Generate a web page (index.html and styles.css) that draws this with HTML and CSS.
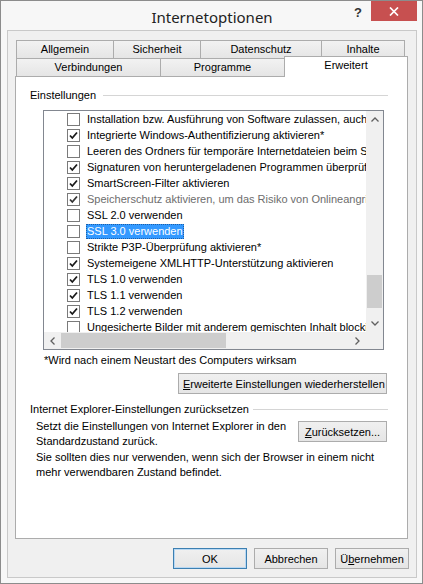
FILE: index.html
```html
<!DOCTYPE html>
<html lang="de">
<head>
    <meta charset="UTF-8">
    <meta name="viewport" content="width=device-width, initial-scale=1.0">
    <title>Internetoptionen</title>
    <link rel="stylesheet" href="styles.css">
</head>
<body>
    <div class="window">
        <div class="titlebar">
            <div></div>
            <div class="title">Internetoptionen</div>
            <div class="controls">
                <span class="help">?</span>
                <span class="close">
                    <svg width="10" height="9" viewBox="0 0 10 9"><path d="M1 0.5L9 8.5M9 0.5L1 8.5" stroke="#fff" stroke-width="1.7"/></svg>
                </span>
            </div>
        </div>

        <div class="client">
            <!-- tab headers, two rows -->
            <div class="tabs">
                <div class="tab-row">
                    <div class="tab tab-allgemein">Allgemein</div>
                    <div class="tab tab-sicherheit">Sicherheit</div>
                    <div class="tab tab-datenschutz">Datenschutz</div>
                    <div class="tab tab-inhalte">Inhalte</div>
                </div>
                <div class="tab-row">
                    <div class="tab tab-verbindungen">Verbindungen</div>
                    <div class="tab tab-programme">Programme</div>
                    <div class="tab tab-erweitert active">Erweitert</div>
                </div>
            </div>

            <div class="panel">
                <div class="group-head">
                    <span>Einstellungen</span>
                    <span class="rule"></span>
                </div>

                <div class="listbox">
                    <div class="list-items">
                        <div class="item"><span class="cb"></span><span class="text">Installation bzw. Ausführung von Software zulassen, auch wenn die Signatur ungültig ist</span></div>
                        <div class="item"><span class="cb on"><svg width="11" height="11" viewBox="0 0 11 11"><path d="M2 5.5L4.3 8L9 2.5" fill="none" stroke="#1a1a1a" stroke-width="1.8"/></svg></span><span class="text">Integrierte Windows-Authentifizierung aktivieren*</span></div>
                        <div class="item"><span class="cb"></span><span class="text">Leeren des Ordners für temporäre Internetdateien beim Schließen des Browsers</span></div>
                        <div class="item"><span class="cb on"><svg width="11" height="11" viewBox="0 0 11 11"><path d="M2 5.5L4.3 8L9 2.5" fill="none" stroke="#1a1a1a" stroke-width="1.8"/></svg></span><span class="text">Signaturen von heruntergeladenen Programmen überprüfen</span></div>
                        <div class="item"><span class="cb on"><svg width="11" height="11" viewBox="0 0 11 11"><path d="M2 5.5L4.3 8L9 2.5" fill="none" stroke="#1a1a1a" stroke-width="1.8"/></svg></span><span class="text">SmartScreen-Filter aktivieren</span></div>
                        <div class="item disabled"><span class="cb on"><svg width="11" height="11" viewBox="0 0 11 11"><path d="M2 5.5L4.3 8L9 2.5" fill="none" stroke="#1a1a1a" stroke-width="1.8"/></svg></span><span class="text">Speicherschutz aktivieren, um das Risiko von Onlineangriffen zu verringern*</span></div>
                        <div class="item"><span class="cb"></span><span class="text">SSL 2.0 verwenden</span></div>
                        <div class="item"><span class="cb"></span><span class="text selected">SSL 3.0 verwenden</span></div>
                        <div class="item"><span class="cb"></span><span class="text">Strikte P3P-Überprüfung aktivieren*</span></div>
                        <div class="item"><span class="cb on"><svg width="11" height="11" viewBox="0 0 11 11"><path d="M2 5.5L4.3 8L9 2.5" fill="none" stroke="#1a1a1a" stroke-width="1.8"/></svg></span><span class="text">Systemeigene XMLHTTP-Unterstützung aktivieren</span></div>
                        <div class="item"><span class="cb on"><svg width="11" height="11" viewBox="0 0 11 11"><path d="M2 5.5L4.3 8L9 2.5" fill="none" stroke="#1a1a1a" stroke-width="1.8"/></svg></span><span class="text">TLS 1.0 verwenden</span></div>
                        <div class="item"><span class="cb on"><svg width="11" height="11" viewBox="0 0 11 11"><path d="M2 5.5L4.3 8L9 2.5" fill="none" stroke="#1a1a1a" stroke-width="1.8"/></svg></span><span class="text">TLS 1.1 verwenden</span></div>
                        <div class="item"><span class="cb on"><svg width="11" height="11" viewBox="0 0 11 11"><path d="M2 5.5L4.3 8L9 2.5" fill="none" stroke="#1a1a1a" stroke-width="1.8"/></svg></span><span class="text">TLS 1.2 verwenden</span></div>
                        <div class="item"><span class="cb"></span><span class="text">Ungesicherte Bilder mit anderem gemischten Inhalt blockieren</span></div>
                    </div>

                    <div class="vscroll">
                        <div class="arrow"><svg width="8" height="5" viewBox="0 0 8 5"><path d="M0.5 4.5L4 1L7.5 4.5" fill="none" stroke="#606060" stroke-width="1.3"/></svg></div>
                        <div class="track"><div class="thumb"></div></div>
                        <div class="arrow"><svg width="8" height="5" viewBox="0 0 8 5"><path d="M0.5 0.5L4 4L7.5 0.5" fill="none" stroke="#606060" stroke-width="1.3"/></svg></div>
                    </div>
                    <div class="hscroll">
                        <div class="arrow"><svg width="5" height="8" viewBox="0 0 5 8"><path d="M4.5 0.5L1 4L4.5 7.5" fill="none" stroke="#606060" stroke-width="1.3"/></svg></div>
                        <div class="track"><div class="thumb"></div></div>
                        <div class="arrow"><svg width="5" height="8" viewBox="0 0 5 8"><path d="M0.5 0.5L4 4L0.5 7.5" fill="none" stroke="#606060" stroke-width="1.3"/></svg></div>
                    </div>
                    <div class="corner"></div>
                </div>

                <div class="note">*Wird nach einem Neustart des Computers wirksam</div>

                <div class="button-row">
                    <button class="btn btn-restore"><u>E</u>rweiterte Einstellungen wiederherstellen</button>
                </div>

                <div class="group-head group-reset">
                    <span>Internet Explorer-Einstellungen zurücksetzen</span>
                    <span class="rule"></span>
                </div>

                <div class="reset-row">
                    <p>Setzt die Einstellungen von Internet Explorer in den<br>Standardzustand zurück.</p>
                    <button class="btn btn-reset"><u>Z</u>urücksetzen...</button>
                </div>
                <p class="warn">Sie sollten dies nur verwenden, wenn sich der Browser in einem nicht<br>mehr verwendbaren Zustand befindet.</p>
            </div>

            <div class="footer">
                <button class="btn dlg default">OK</button>
                <button class="btn dlg">Abbrechen</button>
                <button class="btn dlg">Ü<u>b</u>ernehmen</button>
            </div>
        </div>
    </div>
</body>
</html>
```

FILE: styles.css
```css
/* === DIALOG FRAME === */
* {
    box-sizing: border-box;
}

body {
    margin: 0;
    background: #fff;
    font-family: "Liberation Sans", Arial, sans-serif;
    font-size: 11px;
    color: #000;
}

.window {
    width: 423px;
    height: 584px;
    border: 1px solid #8c8c8c;
    background: #f7f7f7;
    padding: 0 5px 5px 6px;
    display: flex;
    flex-direction: column;
}

.titlebar {
    height: 29px;
    display: grid;
    grid-template-columns: 1fr auto 1fr;
}

.title {
    font-family: "Noto Sans", "Open Sans", sans-serif;
    font-size: 15px;
    color: #222;
    align-self: center;
    padding-top: 2px;
}

.controls {
    display: flex;
    justify-content: flex-end;
    align-items: flex-start;
    margin-right: -5px;
}

.help {
    font-family: "Liberation Sans", Arial, sans-serif;
    font-weight: bold;
    font-size: 13px;
    color: #333;
    margin-top: 4px;
    margin-right: 9px;
}

.close {
    width: 46px;
    height: 20px;
    background: #c75050;
    display: flex;
    align-items: center;
    justify-content: center;
    margin-right: 5px;
}

.client {
    flex: 1;
    background: #f0f0f0;
    border: 1px solid #c9c9c9;
    padding: 9px 8px 8px 7px;
    display: flex;
    flex-direction: column;
}

/* === TABS === */
.tabs {
    padding-left: 1px;
}

.tab-row {
    display: flex;
    align-items: flex-start;
}

.tab {
    height: 18px;
    line-height: 16px;
    text-align: center;
    border: 1px solid #acacac;
    border-bottom: none;
    background: linear-gradient(#f2f2f2, #e5e5e5);
    margin-left: -1px;
}

.tab:first-child {
    margin-left: 0;
}

.tab-allgemein { width: 98px; }
.tab-sicherheit { width: 88px; }
.tab-datenschutz { width: 122px; }
.tab-inhalte { width: 84px; }
.tab-verbindungen { width: 145px; }
.tab-programme { width: 125px; }
.tab-erweitert { width: 124px; }

.tab.active {
    position: relative;
    z-index: 2;
    height: 21px;
    margin-top: -2px;
    margin-bottom: -1px;
    background: #fff;
    line-height: 17px;
}

.panel {
    flex: 1;
    background: #fff;
    border: 1px solid #acacac;
    padding: 12px 19px 0 14px;
    display: flex;
    flex-direction: column;
}

/* === GROUPS === */
.group-head {
    display: flex;
    align-items: center;
    line-height: 13px;
}

.rule {
    flex: 1;
    margin-left: 7px;
    border-top: 1px solid #d5d5d5;
    margin-top: -1px;
}

.group-reset {
    margin-top: 9px;
}

.group-reset .rule {
    margin-left: 4px;
}

/* === SETTINGS LIST === */
.listbox {
    margin: 8px 4px 0 13px;
    height: 240px;
    border: 1px solid #828790;
    display: grid;
    grid-template-columns: 1fr 17px;
    grid-template-rows: 1fr 17px;
}

.list-items {
    overflow: hidden;
    white-space: nowrap;
}

.item {
    height: 16px;
    display: flex;
    align-items: center;
    padding-left: 23px;
}

.cb {
    flex: none;
    width: 13px;
    height: 13px;
    border: 1px solid #7a7a7a;
    background: #fff;
    margin-right: 6px;
    display: flex;
    align-items: center;
    justify-content: center;
}

.text {
    padding: 0 1px;
    line-height: 15px;
}

.item.disabled .text {
    color: #6d6d6d;
}

.item.disabled .cb path {
    stroke: #333;
}

.text.selected {
    background: #3399ff;
    color: #fff;
    outline: 1px dotted #1d5fa6;
    outline-offset: -1px;
}

.vscroll {
    background: #f0f0f0;
    display: flex;
    flex-direction: column;
}

.vscroll .arrow {
    height: 17px;
    display: flex;
    align-items: center;
    justify-content: center;
}

.vscroll .track {
    flex: 1;
}

.vscroll .thumb {
    margin: 147px 1px 0 1px;
    height: 33px;
    background: #cdcdcd;
}

.hscroll {
    background: #f0f0f0;
    display: flex;
}

.hscroll .arrow {
    width: 17px;
    display: flex;
    align-items: center;
    justify-content: center;
}

.hscroll .track {
    flex: 1;
}

.hscroll .thumb {
    width: 165px;
    height: 15px;
    margin-top: 1px;
    background: #cdcdcd;
}

.corner {
    background: #f0f0f0;
}

.note {
    margin: 4px 0 0 14px;
    line-height: 13px;
}

/* === BUTTONS === */
.btn {
    font-family: inherit;
    font-size: 11px;
    color: #000;
    height: 21px;
    padding: 0 4px;
    border: 1px solid #acacac;
    background: linear-gradient(#f0f0f0, #e5e5e5);
    border-radius: 0;
    white-space: nowrap;
}

.button-row {
    display: flex;
    justify-content: flex-end;
    margin: 6px 1px 0 0;
}

.btn-restore {
    width: 209px;
}

.reset-row {
    display: flex;
    justify-content: space-between;
    align-items: flex-start;
    margin: 3px 1px 0 6px;
}

.reset-row p,
.warn {
    margin: 0;
    line-height: 15px;
}

.btn-reset {
    width: 89px;
    margin-top: 2px;
}

.warn {
    margin: 1px 0 0 6px;
}

.footer {
    display: flex;
    justify-content: flex-end;
    gap: 7px;
    margin: 9px -1px 0 0;
}

.dlg {
    width: 74px;
}

.dlg.default {
    border-color: #3c7fb1;
    box-shadow: inset 0 0 0 1px #b8d8f3;
}
```
